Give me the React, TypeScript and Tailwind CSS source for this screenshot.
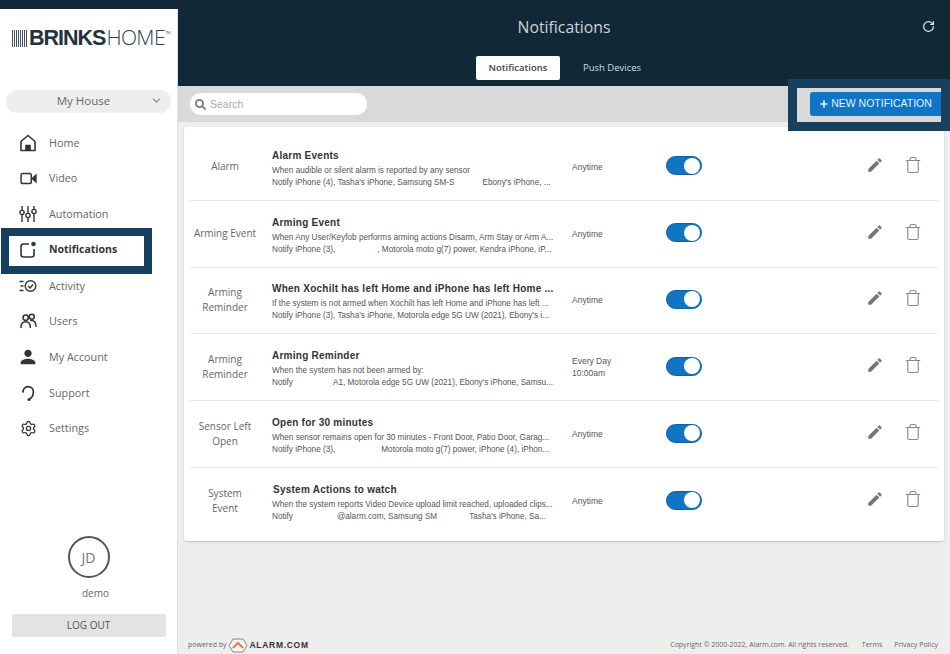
import { ChevronDown, Plus, RotateCw, Settings, Trash } from 'lucide-react';
import { FaSearch } from 'react-icons/fa';
import { MdEdit, MdPerson } from 'react-icons/md';
import type { ReactNode } from 'react';

const HomeIcon = () => (
  <svg viewBox="0 0 18 18" className="h-[18px] w-[18px]" fill="none" stroke="#333" strokeWidth="1.6">
    <path d="M2 16.5V7.5L9 1.5l7 6v9z" strokeLinejoin="round" />
    <path d="M7 16.5v-5h4v5" fill="#333" />
  </svg>
);

const VideoIcon = () => (
  <svg viewBox="0 0 18 14" className="h-[13px] w-[17px]" fill="none" stroke="#333" strokeWidth="1.6">
    <rect x="1" y="1.5" width="11" height="11" rx="2" />
    <path d="M13 7l4-3.5v7z" fill="#333" />
  </svg>
);

const AutomationIcon = () => (
  <svg viewBox="0 0 18 18" className="h-[18px] w-[18px]" fill="none" stroke="#333" strokeWidth="1.4">
    <path d="M3 1v4M3 10v7M9 1v7M9 13v4M15 1v3M15 9v8" />
    <circle cx="3" cy="7.5" r="2.1" />
    <circle cx="9" cy="10.5" r="2.1" />
    <circle cx="15" cy="6.5" r="2.1" />
  </svg>
);

const BellIcon = () => (
  <svg viewBox="0 0 18 18" className="h-[18px] w-[18px]" fill="none" stroke="#333" strokeWidth="1.6">
    <path d="M10 3H4.5A2.5 2.5 0 0 0 2 5.5v8A2.5 2.5 0 0 0 4.5 16h8a2.5 2.5 0 0 0 2.5-2.5V8" />
    <circle cx="14.5" cy="3" r="2.3" fill="#17405f" stroke="none" />
  </svg>
);

const ActivityIcon = () => (
  <svg viewBox="0 0 18 14" className="h-[14px] w-[18px]" fill="none" stroke="#333" strokeWidth="1.4">
    <path d="M0.5 2.5h4M1.5 7h3M0.5 11.5h4" />
    <circle cx="11.5" cy="7" r="5.3" />
    <path d="M9 7l2 2 3-3.5" />
  </svg>
);

const UsersIcon = () => (
  <svg viewBox="0 0 18 16" className="h-[16px] w-[17px]" fill="none" stroke="#333" strokeWidth="1.6">
    <circle cx="6" cy="4.5" r="2.8" />
    <circle cx="12.5" cy="3.5" r="2.6" />
    <path d="M1 15c0-4 1.8-6.2 5-6.2s5 2.2 5 6.2" strokeLinecap="round" />
    <path d="M11.5 7.5c3.5-.5 5.5 2 5.5 6" strokeLinecap="round" />
  </svg>
);

const SupportIcon = () => (
  <svg viewBox="0 0 18 18" className="h-[18px] w-[18px]" fill="none" stroke="#333" strokeWidth="1.7">
    <path d="M4 8a5.2 5.2 0 0 1 10.4-.5c0 3-1 5.5-3 7" strokeLinecap="round" />
    <circle cx="10" cy="15.5" r="1.5" fill="#333" stroke="none" />
  </svg>
);

const AlarmLogo = () => (
  <svg viewBox="0 0 20 15" className="h-[15px] w-[20px]" fill="#f4f4f4" stroke="#888" strokeWidth="1">
    <path d="M5 1h10l4 6.5-4 6.5H5L1 7.5z" />
    <path d="M5 10l5-5 5 5" fill="none" stroke="#e8823a" strokeWidth="2" />
  </svg>
);

const navItems: { label: string; icon: ReactNode; active?: boolean }[] = [
  { label: 'Home', icon: <HomeIcon /> },
  { label: 'Video', icon: <VideoIcon /> },
  { label: 'Automation', icon: <AutomationIcon /> },
  { label: 'Notifications', icon: <BellIcon />, active: true },
  { label: 'Activity', icon: <ActivityIcon /> },
  { label: 'Users', icon: <UsersIcon /> },
  { label: 'My Account', icon: <MdPerson className="h-[22px] w-[22px] text-[#333]" /> },
  { label: 'Support', icon: <SupportIcon /> },
  { label: 'Settings', icon: <Settings className="h-[17px] w-[17px] text-[#333]" strokeWidth={1.8} /> },
];

const Gap = ({ w }: { w: string }) => <span className={`inline-block ${w}`} />;

const rows: { type: string[]; title: string; line1: string; line2: ReactNode; when: string[]; titleClass?: string }[] = [
  {
    type: ['Alarm'],
    title: 'Alarm Events',
    line1: 'When audible or silent alarm is reported by any sensor',
    line2: (
      <>
        Notify iPhone (4), Tasha's iPhone, Samsung SM-S
        <Gap w="w-[28px]" />
        Ebony's iPhone, ...
      </>
    ),
    when: ['Anytime'],
  },
  {
    type: ['Arming Event'],
    title: 'Arming Event',
    line1: 'When Any User/Keyfob performs arming actions Disarm, Arm Stay or Arm A...',
    line2: (
      <>
        Notify iPhone (3),
        <Gap w="w-[42px]" />
        , Motorola moto g(7) power, Kendra iPhone, iP...
      </>
    ),
    when: ['Anytime'],
  },
  {
    type: ['Arming', 'Reminder'],
    title: 'When Xochilt has left Home and iPhone has left Home ...',
    line1: 'If the system is not armed when Xochilt has left Home and iPhone has left ...',
    line2: "Notify iPhone (3), Tasha's iPhone, Motorola edge 5G UW (2021), Ebony's i...",
    when: ['Anytime'],
  },
  {
    type: ['Arming', 'Reminder'],
    title: 'Arming Reminder',
    line1: 'When the system has not been armed by:',
    line2: (
      <>
        Notify
        <Gap w="w-[40px]" />
        A1, Motorola edge 5G UW (2021), Ebony's iPhone, Samsu...
      </>
    ),
    when: ['Every Day', '10:00am'],
  },
  {
    type: ['Sensor Left', 'Open'],
    title: 'Open for 30 minutes',
    line1: 'When sensor remains open for 30 minutes - Front Door, Patio Door, Garag...',
    line2: (
      <>
        Notify iPhone (3),
        <Gap w="w-[46px]" />
        Motorola moto g(7) power, iPhone (4), iPhon...
      </>
    ),
    when: ['Anytime'],
  },
  {
    type: ['System', 'Event'],
    title: 'System Actions to watch',
    titleClass: 'ml-px',
    line1: 'When the system reports Video Device upload limit reached, uploaded clips...',
    line2: (
      <>
        Notify
        <Gap w="w-[44px]" />
        @alarm.com, Samsung SM
        <Gap w="w-[32px]" />
        Tasha's iPhone, Sa...
      </>
    ),
    when: ['Anytime'],
  },
];

const App = () => {
  return (
    <div className="flex h-[654px] w-[950px] overflow-hidden bg-[#112937] font-['Open_Sans',sans-serif]">
      {/* sidebar */}
      <aside className="mt-[9px] flex w-[178px] shrink-0 flex-col border-r border-[#e0e0e0] bg-white">
        <div className="ml-[12px] mt-[19px] flex h-[20px] items-center">
          <div className="mr-px h-[17px] w-[16px] bg-[repeating-linear-gradient(90deg,#44525c_0px,#44525c_1px,transparent_1px,transparent_2px)]" />
          <span className="font-['Liberation_Sans',sans-serif] text-[21.5px] font-bold tracking-[-1px] text-[#22323f]">BRINKS</span>
          <span className="ml-px font-['Open_Sans',sans-serif] text-[21px] font-light tracking-[-0.6px] text-[#33424d]">HOME</span>
          <span className="mb-[11px] text-[4px] text-[#555]">TM</span>
        </div>

        <div className="relative mx-[6px] mt-[42px] flex h-[23px] items-center justify-center rounded-full bg-[#eeeeee] pb-[2px] pr-[10px] text-[11.5px] text-[#666]">
          My House
          <ChevronDown className="absolute right-[8px] h-[13px] w-[13px] text-[#888]" />
        </div>

        <nav className="mt-[12px] flex flex-col">
          {navItems.map((item) => (
            <div key={item.label} className="relative flex h-[35.7px] items-center">
              {item.active && <div className="absolute left-px top-[-3.6px] h-[46px] w-[151px] border-[8px] border-[#17405f]" />}
              <span className="flex w-[49px] shrink-0 justify-center pl-[7px]">{item.icon}</span>
              <span className={item.active ? 'text-[10.5px] font-bold text-[#333]' : 'text-[10.8px] text-[#666]'}>{item.label}</span>
            </div>
          ))}
        </nav>

        <div className="mt-auto flex flex-col items-center pb-[17px]">
          <div className="flex h-[42px] w-[42px] items-center justify-center rounded-full border-2 border-[#555] text-[14px] text-[#777]">JD</div>
          <div className="mt-[8px] h-[15px] pl-[14px] text-[10px] leading-[15px] text-[#666]">demo</div>
          <div className="mt-[13px] flex h-[23px] w-[154px] items-center justify-center rounded-[2px] bg-[#e3e3e3] text-[10px] text-[#555]">LOG OUT</div>
        </div>
      </aside>

      <main className="flex min-w-0 flex-1 flex-col bg-[#eeeeee]">
        {/* header */}
        <header className="relative h-[86px] shrink-0 bg-[#112937]">
          <h1 className="pt-[15px] text-center text-[15.8px] leading-[24px] text-[#ccd4d9]">Notifications</h1>
          <RotateCw className="absolute right-[15px] top-[20px] h-[13px] w-[13px] text-[#e4e8ea]" strokeWidth={2.2} />
          <div className="mt-[17px] flex justify-center pl-[12px]">
            <div className="flex h-[24px] w-[84px] items-center justify-center rounded-[2px] bg-white text-[9.5px] font-semibold text-[#444]">Notifications</div>
            <div className="flex h-[24px] w-[104px] items-center justify-center text-[9.5px] text-[#d5dbdf]">Push Devices</div>
          </div>
        </header>

        {/* search bar */}
        <div className="relative flex h-[36px] shrink-0 items-center justify-between bg-[#d9d9d9] pl-[12px] pr-[9px]">
          <div className="flex h-[22px] w-[177px] items-center rounded-full bg-white pl-[5px]">
            <FaSearch className="h-[11px] w-[11px] text-[#777]" />
            <input
              type="text"
              placeholder="Search"
              className="ml-[4px] mt-px w-[140px] bg-transparent font-['Liberation_Sans',sans-serif] text-[10.5px] placeholder:text-[#aaa] focus:outline-none"
            />
          </div>
          <button className="flex h-[24px] w-[131px] items-center justify-center rounded-l-[3px] bg-[#0f75c4] font-['Liberation_Sans',sans-serif] text-[10.5px] text-[#e6f1fa]">
            <Plus className="mr-[2px] h-[10px] w-[10px]" strokeWidth={4} />
            NEW NOTIFICATION
          </button>
          <div className="pointer-events-none absolute right-0 top-[-7px] z-10 h-[52px] w-[162px] border-[9px] border-[#17405f]" />
        </div>

        {/* list */}
        <div className="mx-[6px] mt-[5px] rounded-[3px] bg-white pb-[6px] pt-[7px] shadow-[0_1px_2px_rgba(0,0,0,0.2)]">
          {rows.map((row, i) => (
            <div key={i} className="mx-[6px] flex h-[66.8px] items-center border-b-[1.5px] border-[#e8e8e8] last:border-b-0">
              <div className="-ml-[6px] w-[82px] shrink-0 text-center font-['Open_Sans',sans-serif] text-[10px] leading-[15.5px] text-[#666]">
                {row.type.map((t) => (
                  <div key={t}>{t}</div>
                ))}
              </div>
              <div className="ml-[6px] w-[300px] shrink-0 pt-[4px] font-['Liberation_Sans',sans-serif]">
                <div className={`text-[10px] font-bold leading-[14px] tracking-[0.25px] text-[#333] ${row.titleClass ?? ''}`}>{row.title}</div>
                <div className="mt-[2px] whitespace-nowrap text-[8.2px] leading-[12px] text-[#555]">{row.line1}</div>
                <div className="whitespace-nowrap text-[8.2px] leading-[12px] text-[#555]">{row.line2}</div>
              </div>
              <div className="w-[94px] shrink-0 font-['Liberation_Sans',sans-serif] text-[8.5px] leading-[12px] text-[#555]">
                {row.when.map((w) => (
                  <div key={w}>{w}</div>
                ))}
              </div>
              <div className="mb-[2px] flex h-[19px] w-[36px] shrink-0 items-center justify-end rounded-full border border-[#0b5fa3] bg-[#0f75c4] pr-px">
                <div className="h-[16px] w-[16px] rounded-full bg-white" />
              </div>
              <MdEdit className="mb-[4px] ml-[164px] h-[18px] w-[18px] shrink-0 text-[#777]" />
              <Trash className="mb-[4px] ml-[20px] h-[18px] w-[18px] shrink-0 text-[#888]" strokeWidth={1.5} />
            </div>
          ))}
        </div>

        {/* footer */}
        <footer className="mt-auto flex h-[18px] items-center justify-between pl-[10px] pr-[12px] text-[7px] text-[#666]">
          <div className="flex items-center">
            <span className="mr-[1px]">powered by</span>
            <AlarmLogo />
            <span className="ml-[2px] font-['Liberation_Sans',sans-serif] text-[8.5px] font-bold tracking-[0.7px] text-[#333]">ALARM.COM</span>
          </div>
          <div className="flex items-center">
            <span>Copyright © 2000-2022, Alarm.com. All rights reserved.</span>
            <span className="ml-[13px]">Terms</span>
            <span className="ml-[12px]">Privacy Policy</span>
          </div>
        </footer>
      </main>
    </div>
  );
};

export default App;
